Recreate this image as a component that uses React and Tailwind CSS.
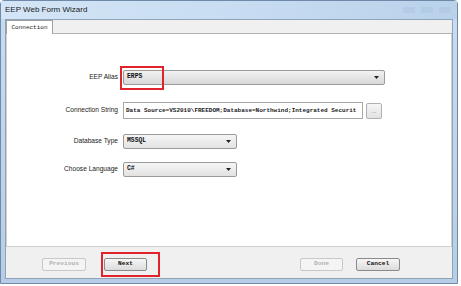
import React from 'react';

const mono = { fontFamily: '"Liberation Mono", "Noto Sans CJK SC", monospace' };

function Arrow() {
    return (
        <svg width="5" height="3" viewBox="0 0 5 3" className="shrink-0">
            <path d="M0 0 L5 0 L2.5 3 Z" fill="#222"/>
        </svg>
    );
}

function Combo({width, value, dark}) {
    return (
        <div className={"flex items-center justify-between h-[15px] border border-[#9a9a9a] rounded-[2px] pl-[3px] pr-[5px] " + (dark ? "bg-gradient-to-b from-[#f2f2f2] to-[#d8d8d8]" : "bg-gradient-to-b from-[#f6f6f6] to-[#e2e2e2]")}
             style={{width}}>
            <span className="text-[6.4px] font-bold text-[#111] leading-none" style={mono}>{value}</span>
            <Arrow/>
        </div>
    );
}

function Row({label, children, mb}) {
    return (
        <div className={"flex items-center " + mb}>
            <div className="w-[116px] pr-[5px] text-right text-[6.6px] text-[#222] leading-none">{label}</div>
            {children}
        </div>
    );
}

function Btn({label, disabled, w}) {
    return (
        <div className={"h-[13px] flex items-center justify-center border rounded-[2px] text-[6.2px] font-bold leading-none " + (disabled ? "border-[#c8c8c8] bg-[#f4f4f4] text-[#b0b0b0]" : "border-[#8a8a8a] bg-gradient-to-b from-[#f6f6f6] to-[#dcdcdc] text-[#111]")}
             style={{width: w, ...mono}}>
            {label}
        </div>
    );
}

export default function App() {
    return (
        <div className="w-[461px] h-[286px] bg-white" style={{fontFamily: '"Liberation Sans", Arial, sans-serif'}}>
            <div className="w-[458px] h-[284px] bg-gradient-to-b from-[#c9ddf1] to-[#b7cde6] border border-[#6f8aa8] rounded-t-[4px] flex flex-col">
                <div className="h-[18px] flex items-center pl-[4px] shrink-0 bg-gradient-to-r from-[#d3e5f6] via-[#c8ddf2] to-[#b9d1ea]">
                    <span className="text-[8px] text-[#1a1a1a] leading-none">EEP Web Form Wizard</span>
                    <div className="ml-auto mr-[6px] flex gap-[6px] opacity-40">
                        <div className="w-[12px] h-[6px] bg-[#a9c3de]"/>
                        <div className="w-[12px] h-[6px] bg-[#a9c3de]"/>
                        <div className="w-[12px] h-[6px] bg-[#a9c3de]"/>
                    </div>
                </div>
                <div className="flex-1 mx-[4px] mb-[4px] bg-[#f0f0f0] border border-[#8fa3ba] flex flex-col">
                    <div className="h-[14px] flex items-end shrink-0 border-b border-[#b4b4b4]">
                        <div className="h-[14px] w-[47px] bg-white border border-b-0 border-[#a0a0a0] flex items-center justify-center -mb-px">
                            <span className="text-[6px] text-[#222] leading-none" style={mono}>Connection</span>
                        </div>
                    </div>
                    <div className="h-[213px] bg-white border-l border-r border-b border-[#d0d0d0] flex flex-col pt-[36px]">
                        <div className="relative">
                            <Row label="EEP Alias" mb="mb-[17px]">
                                <Combo width="262px" value="ERPS" dark/>
                            </Row>
                            <div className="absolute left-[113px] top-[-4px] w-[44px] h-[24px] border-2 border-[#e0242a]"/>
                        </div>
                        <Row label="Connection String" mb="mb-[15px]">
                            <div className="w-[240px] h-[17px] border border-[#a8a8a8] bg-white flex items-center pl-[2px] overflow-hidden">
                                <span className="text-[6px] font-bold text-[#222] whitespace-nowrap leading-none" style={mono}>Data Source=VS2010\FREEDOM;Database=Northwind;Integrated Securit</span>
                            </div>
                            <div className="ml-[3px] w-[16px] h-[16px] border border-[#b0b0b0] rounded-[2px] bg-gradient-to-b from-[#f6f6f6] to-[#e2e2e2] flex items-center justify-center text-[6px] text-[#777] leading-none">...</div>
                        </Row>
                        <Row label="Database Type" mb="mb-[13px]">
                            <Combo width="114px" value="MSSQL"/>
                        </Row>
                        <Row label="Choose Language" mb="">
                            <Combo width="114px" value="C#"/>
                        </Row>
                    </div>
                    <div className="flex-1 flex items-center pl-[36px] pt-[3px]">
                        <Btn label="Previous" disabled w="44px"/>
                        <div className="relative ml-[18px]">
                            <Btn label="Next" w="43px"/>
                            <div className="absolute left-[-3px] top-[-6px] w-[59px] h-[25px] border-2 border-[#e0242a]"/>
                        </div>
                        <div className="ml-[153px]">
                            <Btn label="Done" disabled w="43px"/>
                        </div>
                        <div className="ml-[13px]">
                            <Btn label="Cancel" w="44px"/>
                        </div>
                    </div>
                </div>
            </div>
        </div>
    );
}
